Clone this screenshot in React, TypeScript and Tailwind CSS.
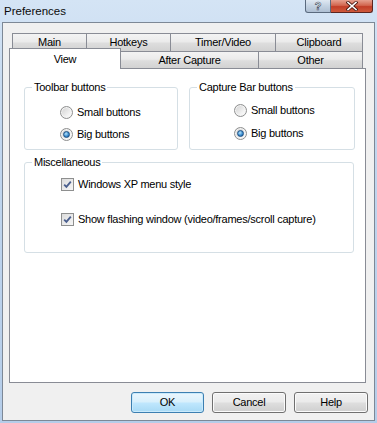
import React from "react";

const font = "font-['Liberation_Sans',Arial,sans-serif]";

const tabBase =
  "flex items-center justify-center border-[#898c95] bg-[linear-gradient(180deg,#f3f3f3,#ebebeb_45%,#dddddd_55%,#d2d2d2)] text-[11px] text-black";

function Radio({ checked, label }: { checked?: boolean; label: string }) {
  return (
    <div className="flex h-[16px] items-center gap-[4px]">
      <span className="flex h-[13px] w-[13px] items-center justify-center rounded-full border border-[#8e8f8f] bg-[linear-gradient(135deg,#cfcfcf,#f4f4f4_70%,#ffffff)] shadow-[inset_0_0_0_1px_#f4f4f4]">
        {checked && (
          <span className="h-[7px] w-[7px] rounded-full border border-[#1c4f82] bg-[radial-gradient(circle_at_40%_35%,#b8e4fb,#3d8ed0_55%,#0f5599)]" />
        )}
      </span>
      <span>{label}</span>
    </div>
  );
}

function Check({ label }: { label: string }) {
  return (
    <div className="flex h-[16px] items-center gap-[4px]">
      <span className="flex h-[13px] w-[13px] items-center justify-center border border-[#8e8f8f] bg-white">
        <span className="flex h-[11px] w-[11px] items-center justify-center bg-[linear-gradient(135deg,#dcdcdc,#f6f6f6)]">
          <svg width="9" height="9" viewBox="0 0 9 9">
            <path d="M1.2 4.6 L3.4 6.9 L7.8 1.6" fill="none" stroke="#4a5f8e" strokeWidth="1.8" />
          </svg>
        </span>
      </span>
      <span>{label}</span>
    </div>
  );
}

function Btn({ label, primary }: { label: string; primary?: boolean }) {
  return (
    <div
      className={
        "flex h-[21px] items-center justify-center rounded-[3px] border text-[11px] " +
        (primary
          ? "w-[73px] border-[#3c7fb1] bg-[linear-gradient(180deg,#eaf6fd,#d9f0fc_45%,#bee6fd_55%,#a7d9f5)] shadow-[inset_0_0_0_1px_#c9eafc]"
          : "w-[74px] border-[#707070] bg-[linear-gradient(180deg,#f2f2f2,#ebebeb_45%,#dddddd_55%,#cfcfcf)] shadow-[inset_0_0_0_1px_#fbfbfb]")
      }
    >
      {label}
    </div>
  );
}

export default function App() {
  return (
    <div
      className={`${font} flex h-[423px] w-[377px] flex-col bg-[linear-gradient(180deg,#d4e4f5,#c2d7ef_30%,#b5cde9)] text-[11px] text-black`}
    >
      {/* title bar */}
      <div className="flex h-[22px] items-start justify-between">
        <span className="pl-[4px] pt-[3px] text-[11.5px] text-[#0b0b0b]">Preferences</span>
        <div className="flex pr-[4px]">
          <div className="flex h-[13px] w-[26px] items-center justify-center rounded-bl-[3px] border border-t-0 border-[#5a6a7e] bg-[linear-gradient(180deg,#dfe8f2,#c3d2e2_50%,#aebfd3)]">
            <span className="text-[11px] font-bold leading-none text-[#f4f6f8] [-webkit-text-stroke:0.6px_#3d4b5c]">?</span>
          </div>
          <div className="flex h-[13px] w-[42px] items-center justify-center rounded-br-[3px] border border-l-0 border-t-0 border-[#5b2520] bg-[linear-gradient(180deg,#e6a08f,#d2664f_45%,#c23d27_55%,#cf5a3c)]">
            <svg width="12" height="10" viewBox="0 0 12 10">
              <path d="M2 1.5 L10 8.5 M10 1.5 L2 8.5" stroke="#4a1a14" strokeWidth="3.2" strokeLinecap="square" />
              <path d="M2 1.5 L10 8.5 M10 1.5 L2 8.5" stroke="#ffffff" strokeWidth="1.6" strokeLinecap="square" />
            </svg>
          </div>
        </div>
      </div>

      {/* client area */}
      <div className="ml-[2px] flex h-[399px] w-[373px] flex-col border border-[#7d8896] bg-[#f0f0f0] tracking-[-0.25px]">
        <div className="ml-[6px] mt-[10px] flex flex-col">
          {/* tab row 1 */}
          <div className="ml-[3px] flex h-[18px]">
            <div className={`${tabBase} w-[75px] border border-b-0`}>Main</div>
            <div className={`${tabBase} w-[84px] border border-b-0 border-l-0`}>Hotkeys</div>
            <div className={`${tabBase} w-[105px] border border-b-0 border-l-0`}>Timer/Video</div>
            <div className={`${tabBase} w-[87px] border border-b-0 border-l-0`}>Clipboard</div>
          </div>
          {/* tab row 2 */}
          <div className="flex h-[17px] items-end">
            <div className="relative z-10 -mb-[1px] flex h-[21px] w-[112px] items-start justify-center border border-b-0 border-[#898c95] bg-white pt-[2px]">
              View
            </div>
            <div className={`${tabBase} h-[17px] w-[138px] border border-b-0 border-l-0`}>After Capture</div>
            <div className={`${tabBase} h-[17px] w-[104px] border border-b-0 border-l-0`}>Other</div>
          </div>

          {/* tab panel */}
          <div className="flex h-[315px] w-[357px] flex-col border border-[#898c95] bg-white">
            <div className="ml-[14px] mt-[11px] flex gap-[11px]">
              <fieldset className="h-[70px] w-[154px] rounded-[3px] border border-[#d5dfe5]">
                <legend className="ml-[7px] px-[2px] leading-[14px]">Toolbar buttons</legend>
                <div className="flex flex-col gap-[6px] pl-[35px] pt-[10px]">
                  <Radio label="Small buttons" />
                  <Radio checked label="Big buttons" />
                </div>
              </fieldset>
              <fieldset className="h-[70px] w-[166px] rounded-[3px] border border-[#d5dfe5]">
                <legend className="ml-[7px] px-[2px] leading-[14px]">Capture Bar buttons</legend>
                <div className="flex flex-col gap-[7px] pl-[44px] pt-[8px]">
                  <Radio label="Small buttons" />
                  <Radio checked label="Big buttons" />
                </div>
              </fieldset>
            </div>
            <fieldset className="ml-[14px] mt-[5px] h-[98px] w-[330px] rounded-[3px] border border-[#d5dfe5]">
              <legend className="ml-[7px] px-[2px] leading-[14px]">Miscellaneous</legend>
              <div className="flex flex-col gap-[19px] pl-[36px] pt-[7px]">
                <Check label="Windows XP menu style" />
                <Check label="Show flashing window (video/frames/scroll capture)" />
              </div>
            </fieldset>
          </div>
        </div>

        {/* buttons */}
        <div className="mt-[9px] flex justify-end gap-[8px] pr-[6px]">
          <Btn primary label="OK" />
          <Btn label="Cancel" />
          <Btn label="Help" />
        </div>
      </div>
    </div>
  );
}
